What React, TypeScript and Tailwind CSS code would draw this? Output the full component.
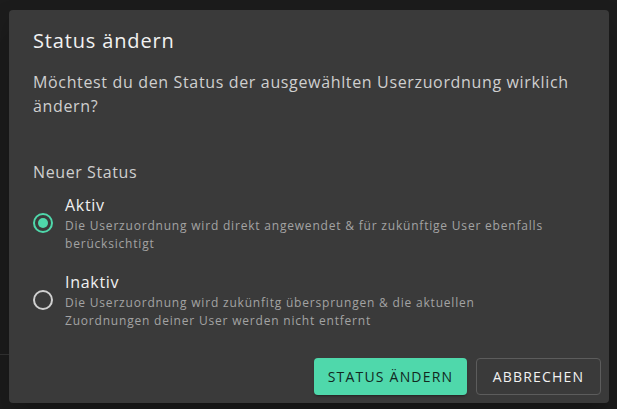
import React from "react";

function Radio({ checked }: { checked: boolean }) {
  return (
    <span className="flex h-[42px] w-[42px] shrink-0 items-center justify-center">
      <span
        className={
          "flex h-[20px] w-[20px] items-center justify-center rounded-full border-2 " +
          (checked ? "border-[#4fd8ab]" : "border-[#d0d0d0]")
        }
      >
        {checked && <span className="h-[10px] w-[10px] rounded-full bg-[#4fd8ab]" />}
      </span>
    </span>
  );
}

export default function App() {
  return (
    <div
      className="relative h-[409px] w-[617px] overflow-hidden bg-[#1c1c1c] pl-[9px] pt-[10px]"
      style={{ fontFamily: '"Open Sans", "Noto Sans", sans-serif' }}
    >
      <div className="absolute left-0 top-[354px] h-px w-[9px] bg-[#2e2e2e]" />
      <div className="flex h-[393px] w-[600px] flex-col rounded-[4px] bg-[#3a3a3a] shadow-[0_11px_15px_-7px_rgba(0,0,0,0.2),0_24px_38px_3px_rgba(0,0,0,0.14)]">
        <h2 className="px-6 pt-[15px] pb-[13px] text-[20px] font-medium leading-[32px] tracking-[0.85px] text-[#f2f2f2]">
          Status ändern
        </h2>
        <div className="flex-1 px-6">
          <p className="text-[16px] leading-[24px] tracking-[0.65px] text-[#cfcfcf]">
            Möchtest du den Status der ausgewählten Userzuordnung wirklich ändern?
          </p>
          <div className="mt-[42px] text-[16px] leading-[24px] tracking-[0.6px] text-[#cfcfcf]">Neuer Status</div>
          <div className="mt-[9px] flex flex-col gap-[17px]">
            <label className="-ml-[11px] flex items-center">
              <Radio checked />
              <span className="ml-[1px] flex w-[490px] flex-col">
                <span className="text-[16px] leading-[24px] tracking-[0.7px] text-[#f0f0f0]">Aktiv</span>
                <span className="text-[12px] leading-[18px] tracking-[0.8px] text-[#a3a3a3]">
                  Die Userzuordnung wird direkt angewendet &amp; für zukünftige User ebenfalls berücksichtigt
                </span>
              </span>
            </label>
            <label className="-ml-[11px] flex items-center">
              <Radio checked={false} />
              <span className="ml-[1px] flex w-[490px] flex-col">
                <span className="text-[16px] leading-[24px] tracking-[0.7px] text-[#f0f0f0]">Inaktiv</span>
                <span className="text-[12px] leading-[18px] tracking-[0.8px] text-[#a3a3a3]">
                  Die Userzuordnung wird zukünfitg übersprungen &amp; die aktuellen Zuordnungen deiner User werden nicht entfernt
                </span>
              </span>
            </label>
          </div>
        </div>
        <div className="flex justify-end gap-[9px] p-2">
          <button className="h-[37px] w-[153px] rounded-[4px] bg-[#4fd8ab] text-[14px] font-medium uppercase tracking-[1.2px] text-[#12291f] shadow-[0_3px_1px_-2px_rgba(0,0,0,0.2),0_2px_2px_0_rgba(0,0,0,0.14)]">
            Status ändern
          </button>
          <button className="h-[37px] w-[125px] rounded-[4px] border border-[#5c5c5c] text-[14px] font-medium uppercase tracking-[1.2px] text-[#f2f2f2]">
            Abbrechen
          </button>
        </div>
      </div>
    </div>
  );
}
